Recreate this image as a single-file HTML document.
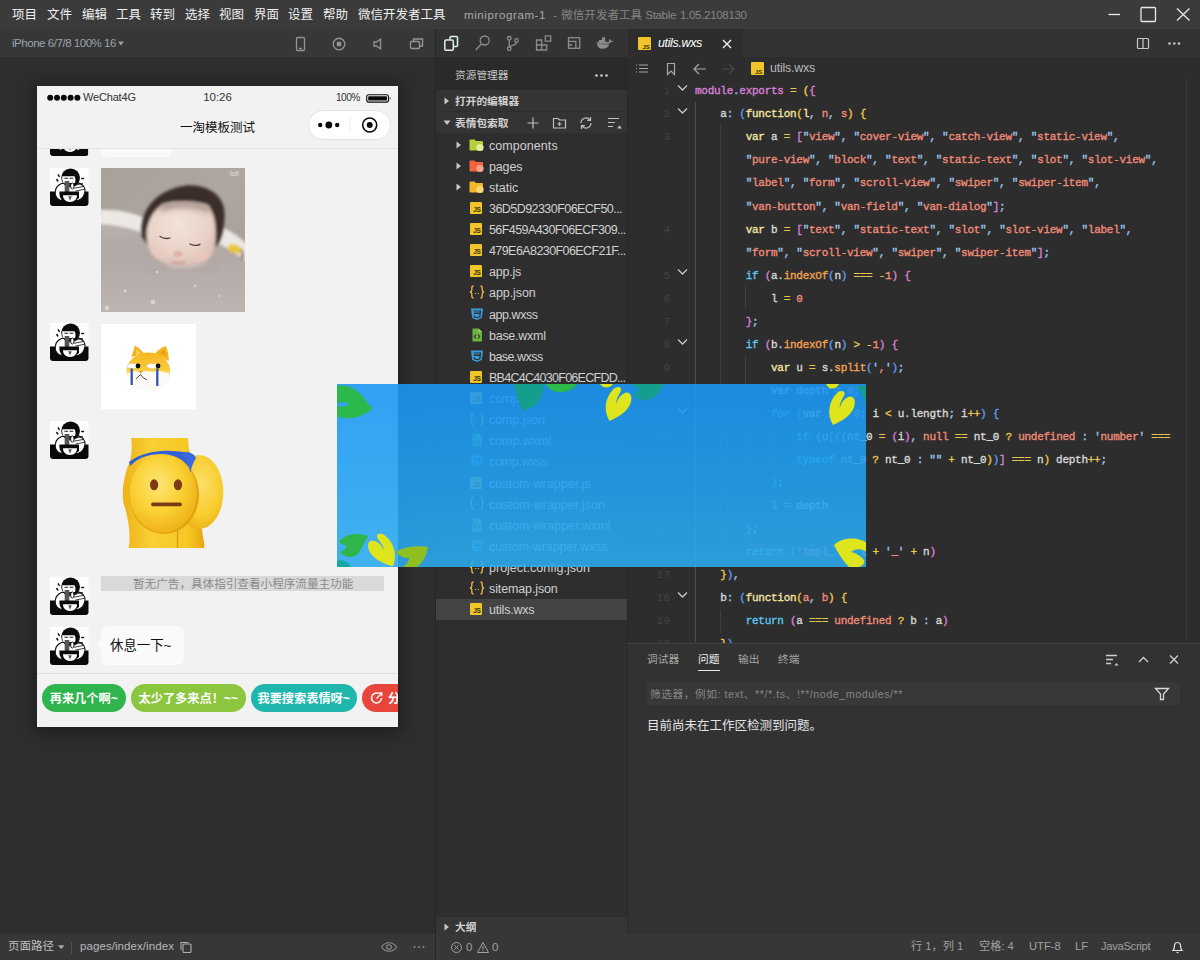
<!DOCTYPE html>
<html lang="zh-CN">
<head>
<meta charset="utf-8">
<title>miniprogram-1 - 微信开发者工具 Stable 1.05.2108130</title>
<style>
*{box-sizing:border-box;margin:0;padding:0}
html,body{width:1200px;height:960px;overflow:hidden;background:#2e2e2e}
body{position:relative;font-family:"Liberation Sans","Noto Sans CJK SC",sans-serif;font-size:12.5px;color:#ccc;-webkit-font-smoothing:antialiased}
.abs{position:absolute}
.t{position:absolute;white-space:nowrap;line-height:1}
svg{position:absolute;overflow:visible}
/* title bar */
#title{left:0;top:0;width:1200px;height:28.500px;background:#3b3b3b}
#title .m{color:#f0f0f0;font-size:12.500px;top:9px}
#title .ttl{color:#858585;font-size:11.500px;top:9.500px}
/* simulator */
#simbar{left:0;top:28.500px;width:436px;height:28.800px;background:#373737}
#sim{left:0;top:57px;width:436px;height:877px;background:#2e2e2e}
#simfoot{left:0;top:933.500px;width:436px;height:26.500px;background:#373737}
#divider{left:434.500px;top:29px;width:1.800px;height:931px;background:#252525}

#phone{left:37px;top:86px;width:360.500px;height:640.500px;background:#f2f2f2;overflow:hidden;box-shadow:0 2px 16px 3px rgba(0,0,0,.38);color:#111}
#phone .t{color:#222}
.av{position:absolute;left:12.700px;width:38.500px;height:38px}
.btn{position:absolute;top:597.500px;height:28.500px;border-radius:15px;color:#fff;font-weight:bold;font-size:12.200px;line-height:30.500px;text-align:center;white-space:nowrap}
/* sidebar */
#activity{left:436px;top:29px;width:191.500px;height:27.500px;background:#333333}
#side{left:436px;top:56.500px;width:191.500px;height:877.500px;background:#2e2e2e;overflow:hidden}
.row{position:absolute;left:0;width:192px;height:21px}
.row .t{left:53px;top:5.500px;font-size:12.500px;color:#d0d0d0}
/* editor */
#tabs{left:628px;top:29px;width:572px;height:28px;background:#333333}
#editor{left:627px;top:57px;width:573px;height:585.500px;background:#2d2d2d;overflow:hidden;border-left:1px solid #282828}
#panel{left:627px;top:642.500px;width:573px;height:292px;background:#323232;border-top:1px solid #424242;border-left:1px solid #2a2a2a}
#status{left:436px;top:933.500px;width:764px;height:26.500px;background:#373737}
.code{position:absolute;left:67px;font-family:"Liberation Mono",monospace;font-size:11px;letter-spacing:-0.27px;white-space:pre;line-height:23px;height:23px;color:#d8d8d8;-webkit-text-stroke:.35px}
.ln{position:absolute;left:20px;width:22px;text-align:right;font-family:"Liberation Mono",monospace;font-size:11px;line-height:23px;color:#424242}
.k{color:#5cc6f0}.s{color:#f08a78}.p{color:#d980d8}.y{color:#f2c744}.f{color:#f0e6a0}.n{color:#f08a78}.w{color:#d4d4d4}.b{color:#5c9ef0}
.code i{font-style:normal}
.q{color:#9cc8ec}
.o{color:#f0a352}.e{color:#e8c84e}
</style>
</head>
<body>
<div id="title" class="abs"><span class="t m" style="left:12px">项目</span><span class="t m" style="left:47px">文件</span><span class="t m" style="left:82px">编辑</span><span class="t m" style="left:116px">工具</span><span class="t m" style="left:150px">转到</span><span class="t m" style="left:185px">选择</span><span class="t m" style="left:219px">视图</span><span class="t m" style="left:254px">界面</span><span class="t m" style="left:288px">设置</span><span class="t m" style="left:323px">帮助</span><span class="t m" style="left:358px">微信开发者工具</span><span class="t ttl" id="tt1" style="left:464px;color:#a8a8a8;letter-spacing:0.605px">miniprogram-1</span><span class="t ttl" id="tt2" style="left:553px">-</span><span class="t ttl" id="tt3" style="left:561.300px;letter-spacing:0.029px">微信开发者工具</span><span class="t ttl" id="tt4" style="left:645.300px;letter-spacing:-0.318px">Stable</span><span class="t ttl" id="tt5" style="left:680px;letter-spacing:-0.305px">1.05.2108130</span><svg style="left:1100px;top:0" width="100" height="29" viewBox="0 0 100 29" fill="none" stroke="#e8e8e8" stroke-width="1.3"><path d="M8.500 14.500H20"/><rect x="41" y="7.500" width="14.500" height="14" rx="1"/><path d="M77 8.500L89.500 20.500M89.500 8.500L77 20.500"/></svg></div>
<div id="simbar" class="abs"><span class="t" id="dev" style="left:12px;top:9.500px;font-size:11.500px;color:#9aa3ab;letter-spacing:-0.459px">iPhone 6/7/8 100% 16</span><svg style="left:117.500px;top:12.500px" width="6" height="5" viewBox="0 0 6 5"><path d="M0 .5h6L3 4.500z" fill="#9aa3ab"/></svg>
<svg style="left:292px;top:7px" width="140" height="16" viewBox="0 0 140 16" fill="none" stroke="#949494" stroke-width="1.35">
<rect x="4.5" y="1.5" width="8" height="13" rx="1.2"/><path d="M7 12.5h3"/>
<circle cx="47" cy="8" r="5.8"/><rect x="44.8" y="5.8" width="4.4" height="4.4" fill="#949494" stroke="none"/>
<path d="M82 6h2.5l4-3v10l-4-3H82z"/>
<rect x="118.500" y="5.500" width="9" height="7" rx="1"/><path d="M121.500 5.500v-2.500h9v7h-3"/>
</svg></div>
<div id="sim" class="abs"></div>
<div id="phone" class="abs">
<!-- status bar -->
<svg style="left:9.500px;top:8px" width="36" height="8" viewBox="0 0 36 8"><g fill="#0a0a0a"><circle cx="3.200" cy="3.800" r="3"/><circle cx="10" cy="3.800" r="3"/><circle cx="16.800" cy="3.800" r="3"/><circle cx="23.600" cy="3.800" r="3"/><circle cx="30.400" cy="3.800" r="3"/></g></svg>
<span class="t" id="wc" style="left:46px;top:5.800px;font-size:11px;color:#333;letter-spacing:-0.177px">WeChat4G</span>
<span class="t" id="clk" style="left:166.300px;top:6.100px;font-size:11.500px;color:#333;letter-spacing:-0.076px">10:26</span>
<span class="t" id="pct" style="left:299px;top:6.500px;font-size:10.200px;color:#333;letter-spacing:-0.591px">100%</span>
<svg style="left:328.800px;top:7.800px" width="27" height="9" viewBox="0 0 27 9"><rect x=".7" y=".7" width="21.800" height="7.400" rx="2" fill="none" stroke="#0a0a0a" stroke-width="1.100"/><rect x="2.200" y="2.200" width="18.800" height="4.400" rx=".8" fill="#0a0a0a"/><path d="M23.800 3c1 .3 1 2.500 0 2.800z" fill="#0a0a0a"/></svg>
<!-- nav bar -->
<span class="t" id="navt" style="left:143px;top:36px;font-size:12.500px;color:#111">一淘模板测试</span>
<div class="abs" style="left:270.500px;top:24px;width:83.500px;height:29.800px;border:1px solid #e3e3e3;border-radius:15px;background:#fff"></div>
<svg style="left:270.500px;top:24px" width="84" height="30" viewBox="0 0 84 30"><g fill="#0a0a0a"><circle cx="12.200" cy="15" r="2.200"/><circle cx="20.800" cy="15" r="3.400"/><circle cx="29.200" cy="15" r="2.200"/><circle cx="61.700" cy="15" r="3"/></g><circle cx="61.700" cy="15" r="7" fill="none" stroke="#0a0a0a" stroke-width="1.600"/><path d="M42 7v16" stroke="#f0f0f0" stroke-width="1"/></svg>
<div class="abs" style="left:0;top:62px;width:361px;height:1px;background:#e2e2e2"></div>
<!-- clipped first row -->
<svg class="av" style="top:32px;clip-path:inset(31px 0 0 0)" viewBox="0 0 38.500 38"><rect width="38.500" height="38" fill="#fdfdfd"/>
<path d="M0 23.400H38.500V35a3 3 0 0 1-3 3H3a3 3 0 0 1-3-3z" fill="#0a0a0a"/>
<path d="M11.500 15.500C8 17 5.500 20 5.200 24C5 28 7 31 11 32.500H28C31 31.500 33 29.500 34 27C35.500 24 35 20 33 17.500C31 15.500 28 14.600 25.500 14.600Z" fill="#fff" stroke="#111" stroke-width="1.100"/>
<circle cx="20.600" cy="9.800" r="9.400" fill="#0a0a0a"/>
<path d="M12.300 8.300H24.500C25.500 10 25.800 12.500 25 15H13.500C12.300 13 12 10.500 12.300 8.300Z" fill="#fff"/>
<path d="M14.400 10.200h3.700M19.600 10.200h3.700" stroke="#222" stroke-width="1.100"/>
<rect x="14.600" y="13" width="4.800" height="11" fill="#707070"/>
<path d="M15.800 13v11M17 13v11M18.200 13v11" stroke="#2a2a2a" stroke-width=".5"/>
<path d="M9.400 23.400H29V30C27 32 25 33 23 33.500H13C11 32 9.800 29 9.400 26z" fill="#0a0a0a"/>
<path d="M13 27.200H27C27 31 24.500 33.900 20 33.900S13 31 13 27.200Z" fill="#fff"/>
<path d="M18.300 28.200l1.700 4.500l1.700-4.500z" fill="#555"/>
<path d="M23 17.800L33 15.300M23.500 20.300L34 18.300M25.500 23L34.500 21.300" stroke="#111" stroke-width=".8"/>
<ellipse cx="22.300" cy="18" rx="1.700" ry="3.100" fill="#fff" stroke="#111" stroke-width=".9"/>
<path d="M8.300 6.800l.9 1.700M6.800 11.500l1 1.500M31.800 10.600h1.700" stroke="#111" stroke-width="1.500" stroke-linecap="round"/></svg>
<div class="abs" style="left:64px;top:50px;width:71px;height:21px;background:#fafafa;border-radius:6px;clip-path:inset(13px 0 0 0)"></div>
<!-- avatars -->
<svg class="av" style="top:82.300px" viewBox="0 0 38.500 38"><rect width="38.500" height="38" fill="#fdfdfd"/>
<path d="M0 23.400H38.500V35a3 3 0 0 1-3 3H3a3 3 0 0 1-3-3z" fill="#0a0a0a"/>
<path d="M11.500 15.500C8 17 5.500 20 5.200 24C5 28 7 31 11 32.500H28C31 31.500 33 29.500 34 27C35.500 24 35 20 33 17.500C31 15.500 28 14.600 25.500 14.600Z" fill="#fff" stroke="#111" stroke-width="1.100"/>
<circle cx="20.600" cy="9.800" r="9.400" fill="#0a0a0a"/>
<path d="M12.300 8.300H24.500C25.500 10 25.800 12.500 25 15H13.500C12.300 13 12 10.500 12.300 8.300Z" fill="#fff"/>
<path d="M14.400 10.200h3.700M19.600 10.200h3.700" stroke="#222" stroke-width="1.100"/>
<rect x="14.600" y="13" width="4.800" height="11" fill="#707070"/>
<path d="M15.800 13v11M17 13v11M18.200 13v11" stroke="#2a2a2a" stroke-width=".5"/>
<path d="M9.400 23.400H29V30C27 32 25 33 23 33.500H13C11 32 9.800 29 9.400 26z" fill="#0a0a0a"/>
<path d="M13 27.200H27C27 31 24.500 33.900 20 33.900S13 31 13 27.200Z" fill="#fff"/>
<path d="M18.300 28.200l1.700 4.500l1.700-4.500z" fill="#555"/>
<path d="M23 17.800L33 15.300M23.500 20.300L34 18.300M25.500 23L34.500 21.300" stroke="#111" stroke-width=".8"/>
<ellipse cx="22.300" cy="18" rx="1.700" ry="3.100" fill="#fff" stroke="#111" stroke-width=".9"/>
<path d="M8.300 6.800l.9 1.700M6.800 11.500l1 1.500M31.800 10.600h1.700" stroke="#111" stroke-width="1.500" stroke-linecap="round"/></svg>
<svg class="av" style="top:237px" viewBox="0 0 38.500 38"><rect width="38.500" height="38" fill="#fdfdfd"/>
<path d="M0 23.400H38.500V35a3 3 0 0 1-3 3H3a3 3 0 0 1-3-3z" fill="#0a0a0a"/>
<path d="M11.500 15.500C8 17 5.500 20 5.200 24C5 28 7 31 11 32.500H28C31 31.500 33 29.500 34 27C35.500 24 35 20 33 17.500C31 15.500 28 14.600 25.500 14.600Z" fill="#fff" stroke="#111" stroke-width="1.100"/>
<circle cx="20.600" cy="9.800" r="9.400" fill="#0a0a0a"/>
<path d="M12.300 8.300H24.500C25.500 10 25.800 12.500 25 15H13.500C12.300 13 12 10.500 12.300 8.300Z" fill="#fff"/>
<path d="M14.400 10.200h3.700M19.600 10.200h3.700" stroke="#222" stroke-width="1.100"/>
<rect x="14.600" y="13" width="4.800" height="11" fill="#707070"/>
<path d="M15.800 13v11M17 13v11M18.200 13v11" stroke="#2a2a2a" stroke-width=".5"/>
<path d="M9.400 23.400H29V30C27 32 25 33 23 33.500H13C11 32 9.800 29 9.400 26z" fill="#0a0a0a"/>
<path d="M13 27.200H27C27 31 24.500 33.900 20 33.900S13 31 13 27.200Z" fill="#fff"/>
<path d="M18.300 28.200l1.700 4.500l1.700-4.500z" fill="#555"/>
<path d="M23 17.800L33 15.300M23.500 20.300L34 18.300M25.500 23L34.500 21.300" stroke="#111" stroke-width=".8"/>
<ellipse cx="22.300" cy="18" rx="1.700" ry="3.100" fill="#fff" stroke="#111" stroke-width=".9"/>
<path d="M8.300 6.800l.9 1.700M6.800 11.500l1 1.500M31.800 10.600h1.700" stroke="#111" stroke-width="1.500" stroke-linecap="round"/></svg>
<svg class="av" style="top:335px" viewBox="0 0 38.500 38"><rect width="38.500" height="38" fill="#fdfdfd"/>
<path d="M0 23.400H38.500V35a3 3 0 0 1-3 3H3a3 3 0 0 1-3-3z" fill="#0a0a0a"/>
<path d="M11.500 15.500C8 17 5.500 20 5.200 24C5 28 7 31 11 32.500H28C31 31.500 33 29.500 34 27C35.500 24 35 20 33 17.500C31 15.500 28 14.600 25.500 14.600Z" fill="#fff" stroke="#111" stroke-width="1.100"/>
<circle cx="20.600" cy="9.800" r="9.400" fill="#0a0a0a"/>
<path d="M12.300 8.300H24.500C25.500 10 25.800 12.500 25 15H13.500C12.300 13 12 10.500 12.300 8.300Z" fill="#fff"/>
<path d="M14.400 10.200h3.700M19.600 10.200h3.700" stroke="#222" stroke-width="1.100"/>
<rect x="14.600" y="13" width="4.800" height="11" fill="#707070"/>
<path d="M15.800 13v11M17 13v11M18.200 13v11" stroke="#2a2a2a" stroke-width=".5"/>
<path d="M9.400 23.400H29V30C27 32 25 33 23 33.500H13C11 32 9.800 29 9.400 26z" fill="#0a0a0a"/>
<path d="M13 27.200H27C27 31 24.500 33.900 20 33.900S13 31 13 27.200Z" fill="#fff"/>
<path d="M18.300 28.200l1.700 4.500l1.700-4.500z" fill="#555"/>
<path d="M23 17.800L33 15.300M23.500 20.300L34 18.300M25.500 23L34.500 21.300" stroke="#111" stroke-width=".8"/>
<ellipse cx="22.300" cy="18" rx="1.700" ry="3.100" fill="#fff" stroke="#111" stroke-width=".9"/>
<path d="M8.300 6.800l.9 1.700M6.800 11.500l1 1.500M31.800 10.600h1.700" stroke="#111" stroke-width="1.500" stroke-linecap="round"/></svg>
<svg class="av" style="top:490.500px" viewBox="0 0 38.500 38"><rect width="38.500" height="38" fill="#fdfdfd"/>
<path d="M0 23.400H38.500V35a3 3 0 0 1-3 3H3a3 3 0 0 1-3-3z" fill="#0a0a0a"/>
<path d="M11.500 15.500C8 17 5.500 20 5.200 24C5 28 7 31 11 32.500H28C31 31.500 33 29.500 34 27C35.500 24 35 20 33 17.500C31 15.500 28 14.600 25.500 14.600Z" fill="#fff" stroke="#111" stroke-width="1.100"/>
<circle cx="20.600" cy="9.800" r="9.400" fill="#0a0a0a"/>
<path d="M12.300 8.300H24.500C25.500 10 25.800 12.500 25 15H13.500C12.300 13 12 10.500 12.300 8.300Z" fill="#fff"/>
<path d="M14.400 10.200h3.700M19.600 10.200h3.700" stroke="#222" stroke-width="1.100"/>
<rect x="14.600" y="13" width="4.800" height="11" fill="#707070"/>
<path d="M15.800 13v11M17 13v11M18.200 13v11" stroke="#2a2a2a" stroke-width=".5"/>
<path d="M9.400 23.400H29V30C27 32 25 33 23 33.500H13C11 32 9.800 29 9.400 26z" fill="#0a0a0a"/>
<path d="M13 27.200H27C27 31 24.500 33.900 20 33.900S13 31 13 27.200Z" fill="#fff"/>
<path d="M18.300 28.200l1.700 4.500l1.700-4.500z" fill="#555"/>
<path d="M23 17.800L33 15.300M23.500 20.300L34 18.300M25.500 23L34.500 21.300" stroke="#111" stroke-width=".8"/>
<ellipse cx="22.300" cy="18" rx="1.700" ry="3.100" fill="#fff" stroke="#111" stroke-width=".9"/>
<path d="M8.300 6.800l.9 1.700M6.800 11.500l1 1.500M31.800 10.600h1.700" stroke="#111" stroke-width="1.500" stroke-linecap="round"/></svg>
<svg class="av" style="top:540.500px" viewBox="0 0 38.500 38"><rect width="38.500" height="38" fill="#fdfdfd"/>
<path d="M0 23.400H38.500V35a3 3 0 0 1-3 3H3a3 3 0 0 1-3-3z" fill="#0a0a0a"/>
<path d="M11.500 15.500C8 17 5.500 20 5.200 24C5 28 7 31 11 32.500H28C31 31.500 33 29.500 34 27C35.500 24 35 20 33 17.500C31 15.500 28 14.600 25.500 14.600Z" fill="#fff" stroke="#111" stroke-width="1.100"/>
<circle cx="20.600" cy="9.800" r="9.400" fill="#0a0a0a"/>
<path d="M12.300 8.300H24.500C25.500 10 25.800 12.500 25 15H13.500C12.300 13 12 10.500 12.300 8.300Z" fill="#fff"/>
<path d="M14.400 10.200h3.700M19.600 10.200h3.700" stroke="#222" stroke-width="1.100"/>
<rect x="14.600" y="13" width="4.800" height="11" fill="#707070"/>
<path d="M15.800 13v11M17 13v11M18.200 13v11" stroke="#2a2a2a" stroke-width=".5"/>
<path d="M9.400 23.400H29V30C27 32 25 33 23 33.500H13C11 32 9.800 29 9.400 26z" fill="#0a0a0a"/>
<path d="M13 27.200H27C27 31 24.500 33.900 20 33.900S13 31 13 27.200Z" fill="#fff"/>
<path d="M18.300 28.200l1.700 4.500l1.700-4.500z" fill="#555"/>
<path d="M23 17.800L33 15.300M23.500 20.300L34 18.300M25.500 23L34.500 21.300" stroke="#111" stroke-width=".8"/>
<ellipse cx="22.300" cy="18" rx="1.700" ry="3.100" fill="#fff" stroke="#111" stroke-width=".9"/>
<path d="M8.300 6.800l.9 1.700M6.800 11.500l1 1.500M31.800 10.600h1.700" stroke="#111" stroke-width="1.500" stroke-linecap="round"/></svg>
<!-- photo placeholder -->
<div id="photo" class="abs" style="left:64px;top:82px;width:144px;height:144px;background:#aaa39b;overflow:hidden">
<svg style="left:0;top:0" width="144" height="144" viewBox="0 0 144 144">
<defs>
<filter id="b1" filterUnits="userSpaceOnUse" x="-10" y="-10" width="164" height="164"><feGaussianBlur stdDeviation="1.400"/></filter>
<filter id="b2" filterUnits="userSpaceOnUse" x="-10" y="-10" width="164" height="164"><feGaussianBlur stdDeviation="3"/></filter>
<filter id="b3" filterUnits="userSpaceOnUse" x="-10" y="-10" width="164" height="164"><feGaussianBlur stdDeviation="0.700"/></filter>
<linearGradient id="wall" x1="0" y1="0" x2="1" y2="1"><stop offset="0" stop-color="#a8a199"/><stop offset=".5" stop-color="#aea79f"/><stop offset="1" stop-color="#a39c94"/></linearGradient>
<linearGradient id="water" x1="0" y1="0" x2="0" y2="1"><stop offset="0" stop-color="#b9b0ad"/><stop offset=".3" stop-color="#b1a7a4"/><stop offset="1" stop-color="#bfb5b2"/></linearGradient>
<radialGradient id="face" cx=".45" cy=".35" r=".75"><stop offset="0" stop-color="#f3e3da"/><stop offset=".6" stop-color="#e9d2c7"/><stop offset="1" stop-color="#d6b8ac"/></radialGradient>
</defs>
<rect width="144" height="144" fill="url(#wall)"/>
<g filter="url(#b1)">
<path d="M-4 42C14 41 32 44 48 52L118 58C128 62 138 68 148 78V96C136 86 124 78 112 74L44 66C30 60 14 57 -4 57Z" fill="#ece8e4"/>
<path d="M-4 56C14 56 30 60 46 67L112 74C126 78 138 88 148 98V150H-4Z" fill="url(#water)"/>
<path d="M127 77c4-2 9-1 12 2c1.500 2 1.500 5 0 6.500c-4 .5-9-1-12-3z" fill="#e9c73e"/>
<path d="M139.500 79c3 3 4 8 3 13l-2.500-2c.5-4 .5-7-.5-11z" fill="#75664f"/>
</g>
<g filter="url(#b1)">
<path d="M41 69C37 46 52 22 85 17.500C105 16 122 26 123.500 44C124 56 122 66 118 75L112 82L46 76Z" fill="#3a2f2b"/>
<path d="M46 72C44 58 50 44 62 36C75 32 95 33 107 37C114 46 116 60 114 78C113 90 102 98 82 98C62 98 48 90 46 72Z" fill="url(#face)"/>
</g>
<g filter="url(#b2)"><path d="M58 38C72 32 96 33 110 40L108 44C94 38 74 37 60 43Z" fill="#4a3a34" opacity=".55"/></g>
<g filter="url(#b1)">
<path d="M40 97C54 102 70 104 84 103C98 102 110 98 118 92V104H40Z" fill="#b3a9a6"/>
<path d="M66 97C74 100 90 100 104 96" stroke="#d9cdc8" stroke-width="1.500" fill="none" opacity=".8"/>
</g>
<g filter="url(#b3)" fill="none" stroke="#55403a" stroke-width="1.300" stroke-linecap="round">
<path d="M59 68.500c3 2 6.500 2.500 10 1.500"/><path d="M89 76c3.500 1.800 7 1.800 10 .3"/>
</g>
<g filter="url(#b1)">
<ellipse cx="77" cy="86" rx="4.500" ry="3" fill="#dbb1a4"/>
<path d="M71 94c4 1.500 9 1.500 13 .5" stroke="#bb857d" stroke-width="1.500" fill="none"/>
<ellipse cx="58" cy="84" rx="8" ry="6" fill="#eccabf" opacity=".6"/>
<ellipse cx="100" cy="88" rx="8" ry="6" fill="#eccabf" opacity=".6"/>
</g>
<g filter="url(#b3)" fill="#e6dedb" opacity=".75"><circle cx="56" cy="104" r="1.300"/><circle cx="52" cy="134" r="2.400"/><circle cx="24" cy="123" r="1.600"/><circle cx="94" cy="118" r="1.200"/><circle cx="6" cy="140" r="2.200"/><circle cx="118" cy="128" r="1"/></g>
</svg>
<span class="t" style="left:129px;top:2px;font-size:7px;color:rgba(255,255,255,.7)">lol!</span>
</div>
<!-- doge sticker -->
<div id="doge" class="abs" style="left:64.200px;top:237.700px;width:94.800px;height:85px;background:#fff">
<svg style="left:0;top:0" width="95" height="85" viewBox="0 0 95 85">
<defs>
<linearGradient id="dg" x1="0" y1="0" x2="0" y2="1"><stop offset="0" stop-color="#f6b722"/><stop offset=".45" stop-color="#f9cb3a"/><stop offset=".62" stop-color="#fdf3d8"/><stop offset="1" stop-color="#ecebe6"/></linearGradient>
<filter id="db" x="-10%" y="-10%" width="120%" height="120%"><feGaussianBlur stdDeviation=".5"/></filter>
</defs>
<g filter="url(#db)">
<path d="M30.500 33L33.900 21.600C38 24 41 27 43 29.500z" fill="#f4b21f"/>
<path d="M54 29.500C57 26 61 23 64.600 21.900C67 26 68 32 67.700 37z" fill="#f4b21f"/>
<path d="M35 31l0.800-5.500l4 4z" fill="#f8d36a"/><path d="M59 29.500l4.500-4.500l1.500 6.500z" fill="#e8a012"/>
<ellipse cx="47.400" cy="47.400" rx="21.900" ry="18.800" fill="url(#dg)"/>
<path d="M27 50C30 47 36 47 40 48.500C43 47 48 47 52 48C57 46.500 63 47 67.500 50C68 58 62 66 47.400 66.200C33 66 26.500 58 27 50Z" fill="#fbfaf6"/>
<ellipse cx="31.500" cy="42" rx="5.600" ry="2.600" fill="#fff" stroke="#d9c9a0" stroke-width=".5"/>
<ellipse cx="51.200" cy="42" rx="5.600" ry="2.600" fill="#fff" stroke="#d9c9a0" stroke-width=".5"/>
<circle cx="37" cy="42" r="2.400" fill="#0c0c0c"/><circle cx="57.100" cy="42" r="2.400" fill="#0c0c0c"/>
<path d="M30.700 44.500V61" stroke="#2c4fae" stroke-width="2.200"/><path d="M56.300 44.500V62" stroke="#2c4fae" stroke-width="2.200"/>
<path d="M37.800 47.300h3.800l-1.900 2.300z" fill="#c98a2a"/>
<path d="M39.500 50.500L35 55.200M39.500 50.500C41 53 43.500 55 45.800 55.700" stroke="#3a2a18" stroke-width=".9" fill="none"/>
</g>
</svg></div>
<!-- peach -->
<div id="peach" class="abs" style="left:64px;top:335px;width:144px;height:144px">
<svg style="left:0;top:0" width="144" height="144" viewBox="0 0 144 144">
<defs>
<radialGradient id="pc1" cx=".42" cy=".38" r=".65"><stop offset="0" stop-color="#fde477"/><stop offset=".55" stop-color="#fad133"/><stop offset="1" stop-color="#eeb018"/></radialGradient>
<radialGradient id="pc2" cx=".55" cy=".4" r=".7"><stop offset="0" stop-color="#fce06a"/><stop offset=".6" stop-color="#f8cc2c"/><stop offset="1" stop-color="#e9a812"/></radialGradient>
<linearGradient id="pb" x1="0" y1="0" x2="1" y2="0"><stop offset="0" stop-color="#eeb21a"/><stop offset=".35" stop-color="#f9cf33"/><stop offset=".8" stop-color="#f7c726"/><stop offset="1" stop-color="#e5a410"/></linearGradient>
<filter id="pf" x="-10%" y="-10%" width="120%" height="120%"><feGaussianBlur stdDeviation=".6"/></filter>
</defs>
<g filter="url(#pf)">
<path d="M30.200 17H87.200C87 24 88 30 90 35L103 122C104 124 103 127 102.800 127H27.800C30 112 27 96 22.500 82C20 70 24 50 29 40C31 32 31 24 30.200 17Z" fill="url(#pb)"/>
<ellipse cx="98" cy="71" rx="24.300" ry="37" fill="url(#pc2)"/>
<path d="M76.500 100V127" stroke="#d99a10" stroke-width="1.200"/>
<ellipse cx="63" cy="73.500" rx="35" ry="39.500" fill="#e2a010"/><ellipse cx="62.200" cy="72.500" rx="33.800" ry="39" fill="url(#pc1)"/>
<path d="M28 41C40 32 56 29 70 30C78 30 84 31 89 32L88 46C82 38 72 33 60 33C48 33 36 37 29.500 45Z" fill="#3060d6"/>
<path d="M87 31C91 32 94 34 95 37C92 42 90 47 89.500 52C88 44 85 38 80 34Z" fill="#3a6ae0"/>
<ellipse cx="53.100" cy="63.800" rx="4.100" ry="5.500" fill="#7b3b12"/><ellipse cx="77" cy="63.800" rx="4.100" ry="5.500" fill="#7b3b12"/>
<path d="M52 83.300H79" stroke="#7b3b12" stroke-width="3.800" stroke-linecap="round"/>
</g></svg></div>
<!-- ad -->
<div class="abs" style="left:63.600px;top:490px;width:283px;height:15px;background:#d9d9d9"></div>
<span class="t" id="adt" style="left:96px;top:491.500px;font-size:11.600px;color:#8a8a8a">暂无广告，具体指引查看小程序流量主功能</span>
<!-- bubble -->
<div class="abs" style="left:63.500px;top:539.500px;width:83px;height:39px;background:#fafafa;border-radius:6px"></div>
<div class="abs" style="left:60.500px;top:555px;width:7px;height:7px;background:#fafafa;transform:rotate(45deg)"></div>
<span class="t" id="bub" style="left:73px;top:553px;font-size:13.400px;color:#111">休息一下~</span>
<!-- footer -->
<div class="abs" style="left:0;top:587px;width:361px;height:1px;background:#dedede"></div>
<div class="btn" style="left:5px;width:83.500px;background:#2fb44e">再来几个啊~</div>
<div class="btn" style="left:93.700px;width:115.300px;background:#8bc63e">太少了多来点！~~</div>
<div class="btn" style="left:213.700px;width:106px;background:#1fb6ad">我要搜索表情呀~</div>
<div class="btn" style="left:325px;width:110px;background:#e8463d;text-align:left;padding-left:26px">分享</div>
<svg style="left:333px;top:605px" width="14" height="14" viewBox="0 0 14 14" fill="none" stroke="#fff" stroke-width="1.500"><path d="M11.500 7a5 5 0 1 1-3-4.600"/><path d="M6.500 7.500l5-5M8.500 2h3.300v3.300" stroke-width="1.300"/></svg>
</div>
<div id="simfoot" class="abs"><div class="abs" style="left:0;top:1px"><span class="t" style="left:8px;top:6px;font-size:11.500px;color:#c0c0c0">页面路径</span><svg style="left:58px;top:10.500px" width="7" height="5" viewBox="0 0 7 5"><path d="M0 .3h6.400L3.200 4.300z" fill="#a8a8a8"/></svg>
<div class="abs" style="left:71px;top:7px;width:1px;height:12px;background:#505050"></div>
<span class="t" id="ppath" style="left:80px;top:6px;font-size:11.500px;color:#b8b8b8;letter-spacing:0.075px">pages/index/index</span>
<svg style="left:179px;top:5.500px" width="14" height="14" viewBox="0 0 14 14" fill="none" stroke="#b0b0b0" stroke-width="1.100"><rect x="4" y="4" width="8" height="8.500" rx="1"/><path d="M2 10v-7.500h7.500"/></svg>
<svg style="left:380px;top:6.500px" width="50" height="12" viewBox="0 0 50 12" fill="none" stroke="#8c8c8c" stroke-width="1.100"><path d="M1.500 6c2-3 4.500-4.300 7.500-4.300s5.500 1.300 7.500 4.300c-2 3-4.500 4.300-7.500 4.300s-5.500-1.300-7.500-4.300z"/><circle cx="9" cy="6" r="2.300"/><g fill="#8c8c8c" stroke="none"><circle cx="34.500" cy="6" r="1"/><circle cx="39" cy="6" r="1"/><circle cx="43.500" cy="6" r="1"/></g></svg></div></div>
<div id="activity" class="abs"><svg style="left:0;top:0" width="192" height="29" viewBox="0 0 192 29" fill="none" stroke="#8c8c8c" stroke-width="1.300"><g stroke="#dff0f0" stroke-width="1.500"><path d="M14 10.500v-2a1 1 0 0 1 1-1h5.500a1 1 0 0 1 1 1v8a1 1 0 0 1-1 1h-2.800"/><rect x="8.800" y="11" width="8.500" height="10.300" rx="1.200"/></g><circle cx="48.700" cy="11.500" r="4.500"/><path d="M45.600 14.800l-5.800 6.200"/><circle cx="73.300" cy="9.300" r="1.800"/><circle cx="73.300" cy="19.800" r="1.800"/><circle cx="80.500" cy="11.500" r="1.800"/><path d="M73.300 11.100v6.900M80.500 13.300c0 3.200-4.500 2.200-7 4.800"/><path d="M100.500 11h5.200v5h-5.200zM105.700 16h5v5h-5zM100.500 16v5h5.200M105.700 11v5h5M109.300 6.800h5.400v5.400h-5.400z"/><rect x="132.500" y="8.700" width="11.200" height="10.600"/><path d="M132.500 12.300h7.300v7M136.300 16h-3.800"/><path d="M160.800 14.800h11.500c1.300-.2 2.200-.9 2.700-2c.9.400 1.800.2 2.500-.5c-.7-.7-1.800-.7-2.500-.2c-.2-.9-.9-1.600-1.600-2c-.7.900-.7 2-.2 2.800h-12.300c-.3 2.800 1.400 6.900 5.700 6.900c3.200 0 5.700-1.400 6.900-4.200z" fill="#8c8c8c" stroke="none"/><path d="M163 11h6.200v2.800h-6.200zM166 8.200h3v2.800h-3z" fill="#8c8c8c" stroke="none"/></svg></div>
<div id="side" class="abs"><div class="abs" style="left:0;top:1.500px;width:192px;height:876px"><div class="abs" style="left:0;top:-2px;width:192px;height:33.700px;background:#2a2a2a"></div><span class="t" style="left:19px;top:12px;font-size:10.700px;color:#c8c8c8">资源管理器</span><svg style="left:159px;top:15.500px" width="13" height="3" viewBox="0 0 13 3" fill="#c8c8c8"><circle cx="1.500" cy="1.500" r="1.350"/><circle cx="6.500" cy="1.500" r="1.350"/><circle cx="11.500" cy="1.500" r="1.350"/></svg><div class="abs" style="left:0;top:31.700px;width:192px;height:21.300px;background:#343434"></div><svg style="left:8px;top:39.3px" width="6" height="8" viewBox="0 0 6 8"><path d="M.5 .5L5 4L.5 7.500z" fill="#c8c8c8"/></svg><span class="t" style="left:19px;top:38px;font-size:10.700px;font-weight:bold;color:#d0d0d0">打开的编辑器</span><div class="abs" style="left:0;top:53.500px;width:192px;height:21.500px;background:#343434"></div><svg style="left:7px;top:62.3px" width="8" height="6" viewBox="0 0 8 6"><path d="M.5 .5h7L4 5z" fill="#c8c8c8"/></svg><span class="t" style="left:19px;top:60px;font-size:10.700px;font-weight:bold;color:#d0d0d0">表情包索取</span><svg style="left:88px;top:57.300px" width="100" height="16" viewBox="0 0 100 16" fill="none" stroke="#c0c0c0" stroke-width="1.200"><path d="M9 2.500v11M3.500 8h11"/><path d="M29.500 3.500h4.500l1.500 1.500h6v8h-12zM35.500 7v4M33.500 9h4"/><path d="M67 8a5 5 0 0 1-9 3M57 8a5 5 0 0 1 9-3M66.500 2v3.300h-3.300M57.500 14v-3.300h3.300"/><path d="M84 3.500h11M84 7.500h7M84 11.500h5"/><path d="M93 13.500l2.500-3l2.500 3z" fill="#c0c0c0" stroke="none"/></svg><div class="row" style="top:76.10px"><svg style="left:20px;top:6.5px" width="6" height="8" viewBox="0 0 6 8"><path d="M.5 .5L5 4L.5 7.500z" fill="#c8c8c8"/></svg><svg style="left:32.5px;top:3.5px" width="16" height="14" viewBox="0 0 16 14"><path d="M.5 2.500a1 1 0 0 1 1-1h4l1.500 1.500h6a1 1 0 0 1 1 1v7.500a1 1 0 0 1-1 1h-11.500a1 1 0 0 1-1-1z" fill="#b6cf3f"/><circle cx="11" cy="9.500" r="3.600" fill="#e3ef9a"/></svg><span class="t" id="f0" style="letter-spacing:0.059px">components</span></div><div class="row" style="top:97.22px"><svg style="left:20px;top:6.5px" width="6" height="8" viewBox="0 0 6 8"><path d="M.5 .5L5 4L.5 7.500z" fill="#c8c8c8"/></svg><svg style="left:32.5px;top:3.5px" width="16" height="14" viewBox="0 0 16 14"><path d="M.5 2.500a1 1 0 0 1 1-1h4l1.500 1.500h6a1 1 0 0 1 1 1v7.500a1 1 0 0 1-1 1h-11.500a1 1 0 0 1-1-1z" fill="#f2643d"/><circle cx="11" cy="9.500" r="3.600" fill="#f7a58a"/></svg><span class="t" id="f1" style="letter-spacing:-0.153px">pages</span></div><div class="row" style="top:118.34px"><svg style="left:20px;top:6.5px" width="6" height="8" viewBox="0 0 6 8"><path d="M.5 .5L5 4L.5 7.500z" fill="#c8c8c8"/></svg><svg style="left:32.5px;top:3.5px" width="16" height="14" viewBox="0 0 16 14"><path d="M.5 2.500a1 1 0 0 1 1-1h4l1.500 1.500h6a1 1 0 0 1 1 1v7.500a1 1 0 0 1-1 1h-11.500a1 1 0 0 1-1-1z" fill="#f3b829"/><circle cx="11" cy="9.500" r="3.600" fill="#f8d877"/></svg><span class="t" id="f2" style="letter-spacing:0.002px">static</span></div><div class="row" style="top:139.46px"><div class="abs" style="left:34.2px;top:4.6px;width:12px;height:12px;background:#f1c42a;border-radius:1px"></div><span class="t" style="left:37.2px;top:9.6px;font-size:6.500px;font-weight:bold;color:#3a2f00;letter-spacing:-.2px">JS</span><span class="t" id="f3" style="letter-spacing:-0.549px">36D5D92330F06ECF50...</span></div><div class="row" style="top:160.58px"><div class="abs" style="left:34.2px;top:4.6px;width:12px;height:12px;background:#f1c42a;border-radius:1px"></div><span class="t" style="left:37.2px;top:9.6px;font-size:6.500px;font-weight:bold;color:#3a2f00;letter-spacing:-.2px">JS</span><span class="t" id="f4" style="letter-spacing:-0.578px">56F459A430F06ECF309...</span></div><div class="row" style="top:181.70px"><div class="abs" style="left:34.2px;top:4.6px;width:12px;height:12px;background:#f1c42a;border-radius:1px"></div><span class="t" style="left:37.2px;top:9.6px;font-size:6.500px;font-weight:bold;color:#3a2f00;letter-spacing:-.2px">JS</span><span class="t" id="f5" style="letter-spacing:-0.578px">479E6A8230F06ECF21F...</span></div><div class="row" style="top:202.82px"><div class="abs" style="left:34.2px;top:4.6px;width:12px;height:12px;background:#f1c42a;border-radius:1px"></div><span class="t" style="left:37.2px;top:9.6px;font-size:6.500px;font-weight:bold;color:#3a2f00;letter-spacing:-.2px">JS</span><span class="t" id="f6" style="letter-spacing:-0.227px">app.js</span></div><div class="row" style="top:223.94px"><svg style="left:32.5px;top:3px" width="16" height="14" viewBox="0 0 16 14" fill="none" stroke="#f0b748" stroke-width="1.300"><path d="M4.500 1C3 1 2.800 2 2.800 3.200V5C2.800 6.200 2.200 6.800 1 7C2.200 7.200 2.800 7.800 2.800 9V10.800C2.800 12 3 13 4.500 13M11.500 1C13 1 13.200 2 13.200 3.200V5C13.200 6.200 13.800 6.800 15 7C13.800 7.200 13.200 7.800 13.200 9V10.800C13.200 12 13 13 11.500 13"/><path d="M6 8.500h1.200M8.800 8.500h1.200" stroke-width="1.200"/></svg><span class="t" id="f7" style="letter-spacing:-0.071px">app.json</span></div><div class="row" style="top:245.06px"><svg style="left:34px;top:3.5px" width="14" height="14" viewBox="0 0 14 14"><path d="M1 1.500h12l-1.200 9.500L7 13l-4.800-2z" fill="#3c9bdc"/><path d="M3.500 4h7l-.25 2.200H4M3.800 6.400h6.400l-.4 3.300L7 10.700l-2.800-1l-.15-1.500" fill="none" stroke="#2e2e2e" stroke-width="1.200"/></svg><span class="t" id="f8" style="letter-spacing:-0.426px">app.wxss</span></div><div class="row" style="top:266.18px"><svg style="left:34px;top:3.5px" width="14" height="14" viewBox="0 0 14 14"><path d="M2.500 0.500h6l3.500 3.500v9.500h-9.500z" fill="#6cb23e"/><path d="M6 6.500L4.300 8.500L6 10.500M8 6.500l1.700 2L8 10.500" fill="none" stroke="#2e2e2e" stroke-width="1.100"/><path d="M8.500 .5v3.500h3.500" fill="#a6d67f"/></svg><span class="t" id="f9" style="letter-spacing:-0.261px">base.wxml</span></div><div class="row" style="top:287.30px"><svg style="left:34px;top:3.5px" width="14" height="14" viewBox="0 0 14 14"><path d="M1 1.500h12l-1.200 9.500L7 13l-4.800-2z" fill="#3c9bdc"/><path d="M3.500 4h7l-.25 2.200H4M3.800 6.400h6.400l-.4 3.300L7 10.700l-2.800-1l-.15-1.500" fill="none" stroke="#2e2e2e" stroke-width="1.200"/></svg><span class="t" id="f10" style="letter-spacing:-0.518px">base.wxss</span></div><div class="row" style="top:308.42px"><div class="abs" style="left:34.2px;top:4.6px;width:12px;height:12px;background:#f1c42a;border-radius:1px"></div><span class="t" style="left:37.2px;top:9.6px;font-size:6.500px;font-weight:bold;color:#3a2f00;letter-spacing:-.2px">JS</span><span class="t" id="f11" style="letter-spacing:-0.722px">BB4C4C4030F06ECFDD...</span></div><div class="row" style="top:329.54px"><div class="abs" style="left:34.2px;top:4.6px;width:12px;height:12px;background:#f1c42a;border-radius:1px"></div><span class="t" style="left:37.2px;top:9.6px;font-size:6.500px;font-weight:bold;color:#3a2f00;letter-spacing:-.2px">JS</span><span class="t" id="f12" style="letter-spacing:-0.083px">comp.js</span></div><div class="row" style="top:350.66px"><svg style="left:32.5px;top:3px" width="16" height="14" viewBox="0 0 16 14" fill="none" stroke="#f0b748" stroke-width="1.300"><path d="M4.500 1C3 1 2.800 2 2.800 3.200V5C2.800 6.200 2.200 6.800 1 7C2.200 7.200 2.800 7.800 2.800 9V10.800C2.800 12 3 13 4.500 13M11.500 1C13 1 13.200 2 13.200 3.200V5C13.200 6.200 13.800 6.800 15 7C13.800 7.200 13.200 7.800 13.200 9V10.800C13.200 12 13 13 11.500 13"/><path d="M6 8.500h1.200M8.800 8.500h1.200" stroke-width="1.200"/></svg><span class="t" id="f13" style="letter-spacing:-0.12px">comp.json</span></div><div class="row" style="top:371.78px"><svg style="left:34px;top:3.5px" width="14" height="14" viewBox="0 0 14 14"><path d="M2.500 0.500h6l3.500 3.500v9.500h-9.500z" fill="#6cb23e"/><path d="M6 6.500L4.300 8.500L6 10.500M8 6.500l1.700 2L8 10.500" fill="none" stroke="#2e2e2e" stroke-width="1.100"/><path d="M8.500 .5v3.500h3.500" fill="#a6d67f"/></svg><span class="t" id="f14" style="letter-spacing:-0.057px">comp.wxml</span></div><div class="row" style="top:392.90px"><svg style="left:34px;top:3.5px" width="14" height="14" viewBox="0 0 14 14"><path d="M1 1.500h12l-1.200 9.500L7 13l-4.800-2z" fill="#3c9bdc"/><path d="M3.500 4h7l-.25 2.200H4M3.800 6.400h6.400l-.4 3.300L7 10.700l-2.800-1l-.15-1.500" fill="none" stroke="#2e2e2e" stroke-width="1.200"/></svg><span class="t" id="f15" style="letter-spacing:-0.314px">comp.wxss</span></div><div class="row" style="top:414.02px"><div class="abs" style="left:34.2px;top:4.6px;width:12px;height:12px;background:#f1c42a;border-radius:1px"></div><span class="t" style="left:37.2px;top:9.6px;font-size:6.500px;font-weight:bold;color:#3a2f00;letter-spacing:-.2px">JS</span><span class="t" id="f16" style="letter-spacing:0.015px">custom-wrapper.js</span></div><div class="row" style="top:435.14px"><svg style="left:32.5px;top:3px" width="16" height="14" viewBox="0 0 16 14" fill="none" stroke="#f0b748" stroke-width="1.300"><path d="M4.500 1C3 1 2.800 2 2.800 3.200V5C2.800 6.200 2.200 6.800 1 7C2.200 7.200 2.800 7.800 2.800 9V10.800C2.800 12 3 13 4.500 13M11.500 1C13 1 13.200 2 13.200 3.200V5C13.200 6.200 13.800 6.800 15 7C13.800 7.200 13.200 7.800 13.200 9V10.800C13.200 12 13 13 11.500 13"/><path d="M6 8.500h1.200M8.800 8.500h1.200" stroke-width="1.200"/></svg><span class="t" id="f17" style="letter-spacing:0.03px">custom-wrapper.json</span></div><div class="row" style="top:456.26px"><svg style="left:34px;top:3.5px" width="14" height="14" viewBox="0 0 14 14"><path d="M2.500 0.500h6l3.500 3.500v9.500h-9.500z" fill="#6cb23e"/><path d="M6 6.500L4.300 8.500L6 10.500M8 6.500l1.700 2L8 10.500" fill="none" stroke="#2e2e2e" stroke-width="1.100"/><path d="M8.500 .5v3.500h3.500" fill="#a6d67f"/></svg><span class="t" id="f18" style="letter-spacing:0.043px">custom-wrapper.wxml</span></div><div class="row" style="top:477.38px"><svg style="left:34px;top:3.5px" width="14" height="14" viewBox="0 0 14 14"><path d="M1 1.500h12l-1.200 9.500L7 13l-4.800-2z" fill="#3c9bdc"/><path d="M3.500 4h7l-.25 2.200H4M3.800 6.400h6.400l-.4 3.300L7 10.700l-2.800-1l-.15-1.500" fill="none" stroke="#2e2e2e" stroke-width="1.200"/></svg><span class="t" id="f19" style="letter-spacing:-0.094px">custom-wrapper.wxss</span></div><div class="row" style="top:498.50px"><svg style="left:32.5px;top:3px" width="16" height="14" viewBox="0 0 16 14" fill="none" stroke="#f0b748" stroke-width="1.300"><path d="M4.500 1C3 1 2.800 2 2.800 3.200V5C2.800 6.200 2.200 6.800 1 7C2.200 7.200 2.800 7.800 2.800 9V10.800C2.800 12 3 13 4.500 13M11.500 1C13 1 13.200 2 13.200 3.200V5C13.200 6.200 13.800 6.800 15 7C13.800 7.200 13.200 7.800 13.200 9V10.800C13.200 12 13 13 11.500 13"/><path d="M6 8.500h1.200M8.800 8.500h1.200" stroke-width="1.200"/></svg><span class="t" id="f20" style="letter-spacing:0.007px">project.config.json</span></div><div class="row" style="top:519.62px"><svg style="left:32.5px;top:3px" width="16" height="14" viewBox="0 0 16 14" fill="none" stroke="#f0b748" stroke-width="1.300"><path d="M4.500 1C3 1 2.800 2 2.800 3.200V5C2.800 6.200 2.200 6.800 1 7C2.200 7.200 2.800 7.800 2.800 9V10.800C2.800 12 3 13 4.500 13M11.500 1C13 1 13.200 2 13.200 3.200V5C13.200 6.200 13.800 6.800 15 7C13.800 7.200 13.200 7.800 13.200 9V10.800C13.200 12 13 13 11.500 13"/><path d="M6 8.500h1.200M8.800 8.500h1.200" stroke-width="1.200"/></svg><span class="t" id="f21" style="letter-spacing:-0.124px">sitemap.json</span></div><div class="row" style="top:540.74px;background:#444444"><div class="abs" style="left:34.2px;top:4.6px;width:12px;height:12px;background:#f1c42a;border-radius:1px"></div><span class="t" style="left:37.2px;top:9.6px;font-size:6.500px;font-weight:bold;color:#3a2f00;letter-spacing:-.2px">JS</span><span class="t" id="f22" style="letter-spacing:-0.204px">utils.wxs</span></div><div class="abs" style="left:0;top:858.800px;width:192px;height:17px;background:#363636"></div><svg style="left:8px;top:865px" width="6" height="8" viewBox="0 0 6 8"><path d="M.5 .5L5 4L.5 7.500z" fill="#c8c8c8"/></svg><span class="t" style="left:19px;top:863.500px;font-size:10.700px;font-weight:bold;color:#d0d0d0">大纲</span></div></div>
<div id="divider" class="abs"></div>
<div id="tabs" class="abs"><div class="abs" style="left:0;top:0;width:114.500px;height:28px;background:#2d2d2d"></div>
<div class="abs" style="left:10px;top:8px;width:13px;height:13px;background:#f1c42a;border-radius:1px"></div><span class="t" style="left:14.500px;top:14.500px;font-size:6px;font-weight:bold;color:#3a2f00;letter-spacing:-.2px">JS</span>
<span class="t" id="tabname" style="left:30px;top:8px;font-size:12.500px;font-style:italic;color:#fff;letter-spacing:-0.359px">utils.wxs</span>
<svg style="left:94px;top:9.500px" width="10" height="10" viewBox="0 0 10 10" stroke="#f0f0f0" stroke-width="1.400"><path d="M1 1l8 8M9 1l-8 8"/></svg>
<svg style="left:508px;top:8px" width="50" height="13" viewBox="0 0 50 13" fill="none" stroke="#c8c8c8" stroke-width="1.200"><rect x="1.500" y="1.500" width="11" height="10" rx="1"/><path d="M7 1.500v10"/><g fill="#c8c8c8" stroke="none"><circle cx="33.500" cy="6.500" r="1.300"/><circle cx="38.300" cy="6.500" r="1.300"/><circle cx="43" cy="6.500" r="1.300"/></g></svg></div>
<div id="editor" class="abs"><div class="abs" style="left:0;top:1px;width:572px;height:585px"><svg style="left:7px;top:4px" width="110" height="14" viewBox="0 0 110 14" fill="none" stroke="#a8a8a8" stroke-width="1.200">
<path d="M4 3h9M4 6.500h9M4 10h9M1 3h1M1 6.500h1M1 10h1"/>
<path d="M32.500 1.500h7v11l-3.500-3.500l-3.500 3.500z"/>
<path d="M71 7h-12M64 2l-5 5l5 5"/>
<path d="M87 7h12M94 2l5 5l-5 5" stroke="#4a4a4a"/>
</svg>
<div class="abs" style="left:122.500px;top:4px;width:13px;height:13px;background:#f1c42a;border-radius:1px"></div><span class="t" style="left:127px;top:10.500px;font-size:6px;font-weight:bold;color:#3a2f00;letter-spacing:-.2px">JS</span>
<span class="t" id="crumbname" style="left:142px;top:4px;font-size:12.500px;color:#b8b8b8;letter-spacing:-0.248px">utils.wxs</span><div class="abs" style="left:66.7px;top:44px;width:1px;height:540px;background:#505050"></div><div class="abs" style="left:92px;top:67px;width:1px;height:439px;background:#3f3f3f"></div><div class="abs" style="left:92px;top:552px;width:1px;height:23px;background:#3f3f3f"></div><div class="abs" style="left:117.4px;top:228px;width:1px;height:23px;background:#3f3f3f"></div><div class="abs" style="left:117.4px;top:297px;width:1px;height:185px;background:#3f3f3f"></div><div class="abs" style="left:142.7px;top:366px;width:1px;height:46px;background:#3f3f3f"></div><div class="ln" style="top:22.30px">1</div>
<svg style="left:48.700px;top:26.10px" width="11" height="8" viewBox="0 0 11 8" fill="none" stroke="#c8c8c8" stroke-width="1.300"><path d="M1 1.500l4.500 4.500l4.500-4.500"/></svg>
<div class="code" style="top:22.30px"><i class="p">module</i><i class="q">.</i><i class="p">exports</i> <i class="e">=</i> <i class="y">(</i><i class="p">{</i></div>
<div class="ln" style="top:45.34px">2</div>
<svg style="left:48.700px;top:49.14px" width="11" height="8" viewBox="0 0 11 8" fill="none" stroke="#c8c8c8" stroke-width="1.300"><path d="M1 1.500l4.500 4.500l4.500-4.500"/></svg>
<div class="code" style="top:45.34px">    a<i class="q">:</i> <i class="b">(</i><i class="f">function</i><i class="y">(</i><i class="f">l</i><i class="q">,</i> <i class="s">n</i><i class="q">,</i> <i class="s">s</i><i class="y">)</i> <i class="y">{</i></div>
<div class="ln" style="top:68.38px">3</div>
<div class="code" style="top:68.38px">        <i class="f">var</i> a <i class="e">=</i> <i class="p">[</i><i class="q">&quot;</i><i class="s">view</i><i class="q">&quot;</i><i class="q">,</i> <i class="q">&quot;</i><i class="s">cover-view</i><i class="q">&quot;</i><i class="q">,</i> <i class="q">&quot;</i><i class="s">catch-view</i><i class="q">&quot;</i><i class="q">,</i> <i class="q">&quot;</i><i class="s">static-view</i><i class="q">&quot;</i><i class="q">,</i></div>
<div class="code" style="top:91.42px">        <i class="q">&quot;</i><i class="s">pure-view</i><i class="q">&quot;</i><i class="q">,</i> <i class="q">&quot;</i><i class="s">block</i><i class="q">&quot;</i><i class="q">,</i> <i class="q">&quot;</i><i class="s">text</i><i class="q">&quot;</i><i class="q">,</i> <i class="q">&quot;</i><i class="s">static-text</i><i class="q">&quot;</i><i class="q">,</i> <i class="q">&quot;</i><i class="s">slot</i><i class="q">&quot;</i><i class="q">,</i> <i class="q">&quot;</i><i class="s">slot-view</i><i class="q">&quot;</i><i class="q">,</i></div>
<div class="code" style="top:114.46px">        <i class="q">&quot;</i><i class="s">label</i><i class="q">&quot;</i><i class="q">,</i> <i class="q">&quot;</i><i class="s">form</i><i class="q">&quot;</i><i class="q">,</i> <i class="q">&quot;</i><i class="s">scroll-view</i><i class="q">&quot;</i><i class="q">,</i> <i class="q">&quot;</i><i class="s">swiper</i><i class="q">&quot;</i><i class="q">,</i> <i class="q">&quot;</i><i class="s">swiper-item</i><i class="q">&quot;</i><i class="q">,</i></div>
<div class="code" style="top:137.50px">        <i class="q">&quot;</i><i class="s">van-button</i><i class="q">&quot;</i><i class="q">,</i> <i class="q">&quot;</i><i class="s">van-field</i><i class="q">&quot;</i><i class="q">,</i> <i class="q">&quot;</i><i class="s">van-dialog</i><i class="q">&quot;</i><i class="p">]</i><i class="q">;</i></div>
<div class="ln" style="top:160.54px">4</div>
<div class="code" style="top:160.54px">        <i class="f">var</i> b <i class="e">=</i> <i class="p">[</i><i class="q">&quot;</i><i class="s">text</i><i class="q">&quot;</i><i class="q">,</i> <i class="q">&quot;</i><i class="s">static-text</i><i class="q">&quot;</i><i class="q">,</i> <i class="q">&quot;</i><i class="s">slot</i><i class="q">&quot;</i><i class="q">,</i> <i class="q">&quot;</i><i class="s">slot-view</i><i class="q">&quot;</i><i class="q">,</i> <i class="q">&quot;</i><i class="s">label</i><i class="q">&quot;</i><i class="q">,</i></div>
<div class="code" style="top:183.58px">        <i class="q">&quot;</i><i class="s">form</i><i class="q">&quot;</i><i class="q">,</i> <i class="q">&quot;</i><i class="s">scroll-view</i><i class="q">&quot;</i><i class="q">,</i> <i class="q">&quot;</i><i class="s">swiper</i><i class="q">&quot;</i><i class="q">,</i> <i class="q">&quot;</i><i class="s">swiper-item</i><i class="q">&quot;</i><i class="p">]</i><i class="q">;</i></div>
<div class="ln" style="top:206.62px">5</div>
<svg style="left:48.700px;top:210.42px" width="11" height="8" viewBox="0 0 11 8" fill="none" stroke="#c8c8c8" stroke-width="1.300"><path d="M1 1.500l4.500 4.500l4.500-4.500"/></svg>
<div class="code" style="top:206.62px">        <i class="k">if</i> <i class="p">(</i>a<i class="q">.</i><i class="o">indexOf</i><i class="b">(</i>n<i class="b">)</i> <i class="e">===</i> <i class="e">-</i><i class="s">1</i><i class="p">)</i> <i class="p">{</i></div>
<div class="ln" style="top:229.66px">6</div>
<div class="code" style="top:229.66px">            l <i class="e">=</i> <i class="s">0</i></div>
<div class="ln" style="top:252.70px">7</div>
<div class="code" style="top:252.70px">        <i class="p">}</i><i class="q">;</i></div>
<div class="ln" style="top:275.74px">8</div>
<svg style="left:48.700px;top:279.54px" width="11" height="8" viewBox="0 0 11 8" fill="none" stroke="#c8c8c8" stroke-width="1.300"><path d="M1 1.500l4.500 4.500l4.500-4.500"/></svg>
<div class="code" style="top:275.74px">        <i class="k">if</i> <i class="p">(</i>b<i class="q">.</i><i class="o">indexOf</i><i class="b">(</i>n<i class="b">)</i> <i class="e">&gt;</i> <i class="e">-</i><i class="s">1</i><i class="p">)</i> <i class="p">{</i></div>
<div class="ln" style="top:298.78px">9</div>
<div class="code" style="top:298.78px">            <i class="f">var</i> u <i class="e">=</i> s<i class="q">.</i><i class="o">split</i><i class="b">(</i><i class="q">&#x27;</i><i class="s">,</i><i class="q">&#x27;</i><i class="b">)</i><i class="q">;</i></div>
<div class="ln" style="top:321.82px">10</div>
<div class="code" style="top:321.82px">            <i class="f">var</i> depth <i class="e">=</i> <i class="s">0</i><i class="q">;</i></div>
<div class="ln" style="top:344.86px">11</div>
<svg style="left:48.700px;top:348.66px" width="11" height="8" viewBox="0 0 11 8" fill="none" stroke="#c8c8c8" stroke-width="1.300"><path d="M1 1.500l4.500 4.500l4.500-4.500"/></svg>
<div class="code" style="top:344.86px">            <i class="k">for</i> <i class="b">(</i><i class="f">var</i> i <i class="e">=</i> <i class="s">0</i><i class="q">;</i> i <i class="e">&lt;</i> u<i class="q">.</i>length<i class="q">;</i> i<i class="e">++</i><i class="b">)</i> <i class="b">{</i></div>
<div class="ln" style="top:367.90px">12</div>
<div class="code" style="top:367.90px">                <i class="k">if</i> <i class="y">(</i>u<i class="p">[</i><i class="b">(</i><i class="y">(</i>nt_0 <i class="e">=</i> <i class="p">(</i>i<i class="p">)</i><i class="q">,</i> <i class="s">null</i> <i class="e">==</i> nt_0 <i class="e">?</i> <i class="s">undefined</i> <i class="q">:</i> <i class="q">&#x27;</i><i class="s">number</i><i class="q">&#x27;</i> <i class="e">===</i></div>
<div class="code" style="top:390.94px">                <i class="k">typeof</i> nt_0 <i class="e">?</i> nt_0 <i class="q">:</i> <i class="q">&quot;&quot;</i> <i class="e">+</i> nt_0<i class="y">)</i><i class="b">)</i><i class="p">]</i> <i class="e">===</i> n<i class="y">)</i> depth<i class="e">++</i><i class="q">;</i></div>
<div class="ln" style="top:413.98px">13</div>
<div class="code" style="top:413.98px">            <i class="b">}</i><i class="q">;</i></div>
<div class="ln" style="top:437.02px">14</div>
<div class="code" style="top:437.02px">            l <i class="e">=</i> depth</div>
<div class="ln" style="top:460.06px">15</div>
<div class="code" style="top:460.06px">        <i class="p">}</i><i class="q">;</i></div>
<div class="ln" style="top:483.10px">16</div>
<div class="code" style="top:483.10px">        <i class="k">return</i> <i class="p">(</i><i class="q">&#x27;</i><i class="s">tmpl_</i><i class="q">&#x27;</i> <i class="e">+</i> l <i class="e">+</i> <i class="q">&#x27;</i><i class="s">_</i><i class="q">&#x27;</i> <i class="e">+</i> n<i class="p">)</i></div>
<div class="ln" style="top:506.14px">17</div>
<div class="code" style="top:506.14px">    <i class="y">}</i><i class="b">)</i><i class="q">,</i></div>
<div class="ln" style="top:529.18px">18</div>
<svg style="left:48.700px;top:532.98px" width="11" height="8" viewBox="0 0 11 8" fill="none" stroke="#c8c8c8" stroke-width="1.300"><path d="M1 1.500l4.500 4.500l4.500-4.500"/></svg>
<div class="code" style="top:529.18px">    b<i class="q">:</i> <i class="b">(</i><i class="f">function</i><i class="y">(</i><i class="s">a</i><i class="q">,</i> <i class="s">b</i><i class="y">)</i> <i class="y">{</i></div>
<div class="ln" style="top:552.22px">19</div>
<div class="code" style="top:552.22px">        <i class="k">return</i> <i class="p">(</i>a <i class="e">===</i> <i class="s">undefined</i> <i class="e">?</i> b <i class="q">:</i> a<i class="p">)</i></div>
<div class="ln" style="top:575.26px">19</div>
<div class="code" style="top:575.26px">    <i class="y">}</i><i class="b">)</i><i class="q">,</i></div><div class="abs" style="left:557.500px;top:21px;width:1px;height:565px;background:#3a3a3a"></div></div></div>
<div id="panel" class="abs"><span class="t" style="left:19px;top:10px;font-size:10.700px;color:#a8a8a8">调试器</span>
<span class="t" style="left:70px;top:10px;font-size:10.700px;color:#f0f0f0">问题</span>
<div class="abs" style="left:70px;top:26px;width:21.500px;height:1px;background:#e8e8e8"></div>
<span class="t" style="left:110px;top:10px;font-size:10.700px;color:#a8a8a8">输出</span>
<span class="t" style="left:150px;top:10px;font-size:10.700px;color:#a8a8a8">终端</span>
<svg style="left:476px;top:9px" width="80" height="14" viewBox="0 0 80 14" fill="none" stroke="#d0d0d0" stroke-width="1.300"><path d="M2 2.500h11M2 6.500h7M2 10.500h5"/><path d="M10.500 12.500l2-2.500l2 2.500z" fill="#d0d0d0" stroke="none"/><path d="M35 9l4.500-4.500l4.500 4.500"/><path d="M66 2.500l8 8M74 2.500l-8 8"/></svg>
<div class="abs" style="left:18.500px;top:38px;width:533px;height:23px;background:#383838"></div>
<span class="t" id="filt" style="left:22px;top:45px;font-size:10.700px;color:#868686;letter-spacing:0.548px">筛选器，例如: text、**/*.ts、!**/node_modules/**</span>
<svg style="left:526px;top:43px" width="16" height="14" viewBox="0 0 16 14" fill="none" stroke="#d8d8d8" stroke-width="1.300"><path d="M1.500 1.500h13l-5 5.500v5.500h-3v-5.500z"/></svg>
<span class="t" id="noprob" style="left:19px;top:76px;font-size:12.500px;color:#e4e4e4">目前尚未在工作区检测到问题。</span></div>
<div id="status" class="abs"><div class="abs" style="left:0;top:1px"><svg style="left:14px;top:6px" width="56" height="13" viewBox="0 0 56 13" fill="none" stroke="#a0a0a0" stroke-width="1"><circle cx="6.500" cy="6.500" r="5"/><path d="M4.500 4.500l4 4M8.500 4.500l-4 4"/><path d="M33 1.500l5.500 10h-11z"/><path d="M33 5v3.500M33 9.500v1"/></svg>
<span class="t" style="left:30px;top:7.800px;font-size:11.500px;color:#a0a0a0">0</span>
<span class="t" style="left:56px;top:7.800px;font-size:11.500px;color:#a0a0a0">0</span>
<span class="t" id="st1" style="left:475px;top:6.500px;font-size:11.200px;color:#a0a0a0">行 1，列 1</span>
<span class="t" id="st2" style="left:543px;top:6.500px;font-size:11.200px;color:#a0a0a0">空格: 4</span>
<span class="t" id="st3" style="left:593px;top:6.500px;font-size:11.200px;color:#a0a0a0">UTF-8</span>
<span class="t" id="st4" style="left:639px;top:6.500px;font-size:11.200px;color:#a0a0a0">LF</span>
<span class="t" id="st5" style="left:665px;top:6.500px;font-size:11.200px;color:#a0a0a0;letter-spacing:-.3px">JavaScript</span>
<svg style="left:735px;top:5.500px" width="13" height="14" viewBox="0 0 13 14" fill="none" stroke="#e0e0e0" stroke-width="1.200"><path d="M2 10.500c1-1 1.500-2 1.500-5a3 3 0 0 1 6 0c0 3 .5 4 1.500 5z"/><path d="M5.500 12.500h2"/></svg></div></div>
<div id="banner" class="abs" style="left:337px;top:384px;width:529.300px;height:183px;overflow:hidden;background:linear-gradient(180deg,rgba(27,150,244,.89) 0%,rgba(33,160,242,.89) 50%,rgba(44,170,238,.89) 100%)">
<svg style="left:0;top:0" width="529" height="183" viewBox="0 0 529 183">
<!-- top-left green -->
<path d="M0 2C8 0 20 4 27 14C30 19 33 22 36 24C30 30 20 35 8 34C4 34 1 33 0 32V22C6 24 10 22 12 19C8 18 3 18 0 19Z" fill="#2cb84b"/>
<!-- bottom-left group -->
<path d="M2 158C8 150 20 148 31 152C27 158 25 164 22 169C16 175 8 174 3 168C6 167 9 165 10 162C7 161 4 160 2 158Z" fill="#2fb54a"/>
<path d="M5 35C-1 25 0 12 9 3C12 0 17.500 0 16.500 4.500C15 8.500 11.500 12 11.800 18C13 12.500 17 7.500 22 6.500C27 6 28.500 13 25 19.500C21 27 12 32 5 35Z" transform="translate(56,147) scale(-1,1) rotate(8)" fill="#dfe51c"/>
<path d="M59 168C66 163 80 161 91 163C90 171 86 178 80 183H66C70 180 72 177 72 174C67 174 62 172 59 168Z" fill="#8fbf20"/>
<path d="M0 177C5 175 11 177 14 183H0Z" fill="#13a7a0"/>
<!-- top teal + green (over sidebar) -->
<path d="M177 0H206C207 8 204 16 198 21C194 24 190 24 187 27C182 20 178 10 177 0Z" fill="#149f8c"/>
<path d="M208 0H240C236 6 228 9 220 8C215 7 211 4 208 0Z" fill="#2cb84b"/>
<!-- top yellow leaf (over sidebar/editor edge) -->
<path d="M263 0H276C274 3 270 4 266 3Z" fill="#dfe51c"/>
<path d="M5 35C-1 25 0 12 9 3C12 0 17.500 0 16.500 4.500C15 8.500 11.500 12 11.800 18C13 12.500 17 7.500 22 6.500C27 6 28.500 13 25 19.500C21 27 12 32 5 35Z" transform="translate(267.500,2)" fill="#dfe51c"/>
<path d="M294 0H327C324 8 318 14 310 16C304 17 299 14 297 10C300 9 302 7 302 4C299 3 296 2 294 0Z" fill="#149f8c"/>
<!-- top-right -->
<path d="M489 0H502C500 4 496 5.500 492 4Z" fill="#dfe51c"/>
<path d="M5 35C-1 25 0 12 9 3C12 0 17.500 0 16.500 4.500C15 8.500 11.500 12 11.800 18C13 12.500 17 7.500 22 6.500C27 6 28.500 13 25 19.500C21 27 12 32 5 35Z" transform="translate(491,6)" fill="#dfe51c"/>
<path d="M519 2C523 6 527 12 529.500 21V2Z" fill="#149f8c"/>
<!-- bottom-right yellow -->
<path d="M497 161C503 155 514 153 524 156C527 157 529 158 529.500 159V168C524 164 518 165 514 168C519 169 524 172 527 176C528 179 526 182 522 183H512C506 177 501 169 497 161Z" fill="#dfe51c"/>
</svg>
</div>

</body>
</html>
